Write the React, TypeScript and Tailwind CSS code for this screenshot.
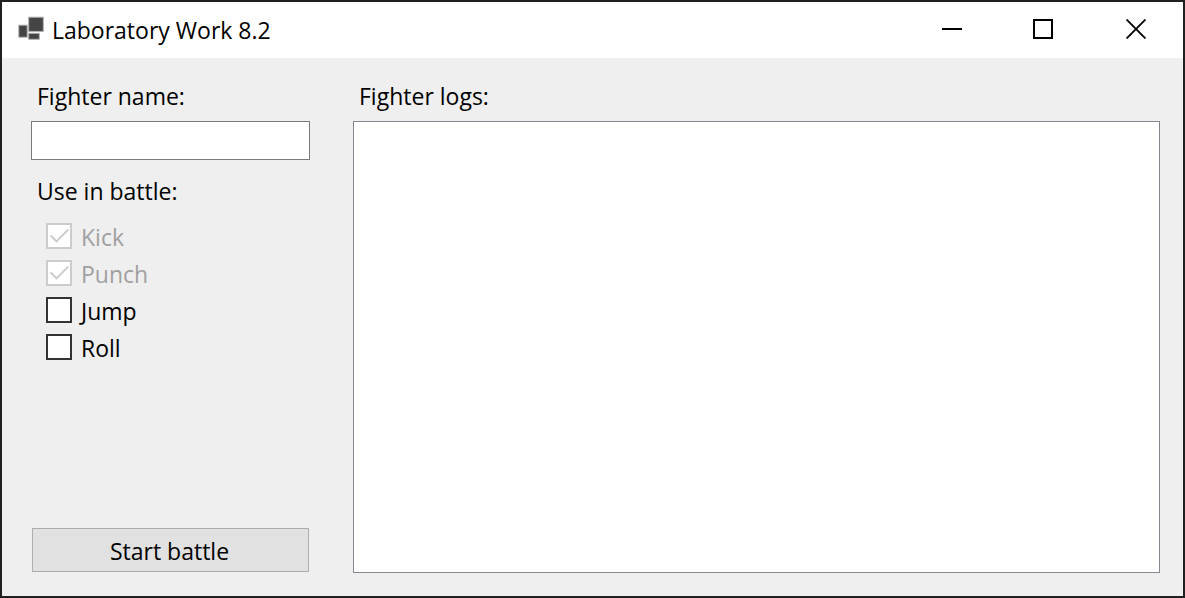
import { useState } from "react";

type Move = { name: string; required: boolean };

const moves: Move[] = [
  { name: "Kick", required: true },
  { name: "Punch", required: true },
  { name: "Jump", required: false },
  { name: "Roll", required: false },
];

function MoveOption({ name, required }: Move) {
  const [checked, setChecked] = useState(required);
  return (
    <label className={required ? "flex h-[37px] items-center gap-[9px] text-[#a0a0a0]" : "flex h-[37px] items-center gap-[9px] text-black"}>
      <span className="grid pb-0.5">
        <input
          type="checkbox"
          checked={checked}
          disabled={required}
          onChange={(e) => setChecked(e.target.checked)}
          className="peer col-start-1 row-start-1 size-[26px] appearance-none border-2 border-[#333333] bg-white disabled:border-[#cccccc]"
        />
        <svg
          viewBox="0 0 26 26"
          aria-hidden="true"
          className="pointer-events-none invisible col-start-1 row-start-1 size-[26px] text-[#333333] peer-checked:visible peer-disabled:text-[#cccccc]"
        >
          <path d="M4.5 12.5 L10.5 18.3 L22.3 6.5" fill="none" stroke="currentColor" strokeWidth="1.9" />
        </svg>
      </span>
      <span>{name}</span>
    </label>
  );
}

function TitleBar() {
  return (
    <header className="flex h-14 items-stretch bg-white">
      <div className="flex flex-1 items-center gap-2 pl-4">
        <span className="pb-0.5">
          <svg viewBox="0 0 26 26" aria-hidden="true" className="block size-[26px]">
            <g fill="#444444" stroke="#b0b0b0" strokeWidth="1">
              <rect x="10.7" y="1.2" width="14.6" height="14.2" />
              <rect x="0.8" y="9.2" width="8.4" height="12" />
              <rect x="10.7" y="17.3" width="10.6" height="6" />
            </g>
          </svg>
        </span>
        <h1>Laboratory Work 8.2</h1>
      </div>
      <button type="button" aria-label="Minimize" className="flex w-[90px] items-center justify-center pb-0.5">
        <svg viewBox="0 0 20 20" className="size-5">
          <rect y="9" width="20" height="2" />
        </svg>
      </button>
      <button type="button" aria-label="Maximize" className="flex w-[92px] items-center justify-center pb-0.5">
        <svg viewBox="0 0 20 20" className="size-5">
          <rect x="1" y="1" width="18" height="18" fill="none" stroke="black" strokeWidth="2" />
        </svg>
      </button>
      <button type="button" aria-label="Close" className="flex w-[94px] items-center justify-center pb-0.5">
        <svg viewBox="0 0 20 20" className="size-5">
          <path d="M0.5 0.5 L19.5 19.5 M19.5 0.5 L0.5 19.5" stroke="black" strokeWidth="1.9" />
        </svg>
      </button>
    </header>
  );
}

export default function App() {
  return (
    <div className="flex min-h-screen flex-col border-2 border-[#202020] bg-[#efefef] font-['Open_Sans','Noto_Sans',sans-serif] text-[23px] leading-7 text-black">
      <TitleBar />
      <main className="grid flex-1 grid-cols-[279px_1fr] gap-[43px] pt-6 pr-[23px] pb-[23px] pl-[29px]">
        <form className="flex flex-col" onSubmit={(e) => e.preventDefault()}>
          <label htmlFor="fighter" className="pl-1.5">Fighter name:</label>
          <input id="fighter" type="text" className="mt-[11px] h-[39px] border border-[#7a7a7a] bg-white px-2 outline-none" />
          <fieldset className="mt-[17px]">
            <legend className="pl-1.5">Use in battle:</legend>
            <div className="flex flex-col items-start pt-[13px] pl-[15px]">
              {moves.map((move) => (
                <MoveOption key={move.name} {...move} />
              ))}
            </div>
          </fieldset>
          <button type="submit" className="mx-px mt-auto mb-px h-11 border border-[#adadad] bg-[#e1e1e1] pt-0.5 pr-0.5">
            Start battle
          </button>
        </form>
        <section className="flex flex-col">
          <label htmlFor="logs" className="pl-1.5">Fighter logs:</label>
          <textarea id="logs" readOnly className="mt-[11px] flex-1 resize-none border border-[#828790] bg-white p-2 outline-none" />
        </section>
      </main>
    </div>
  );
}
